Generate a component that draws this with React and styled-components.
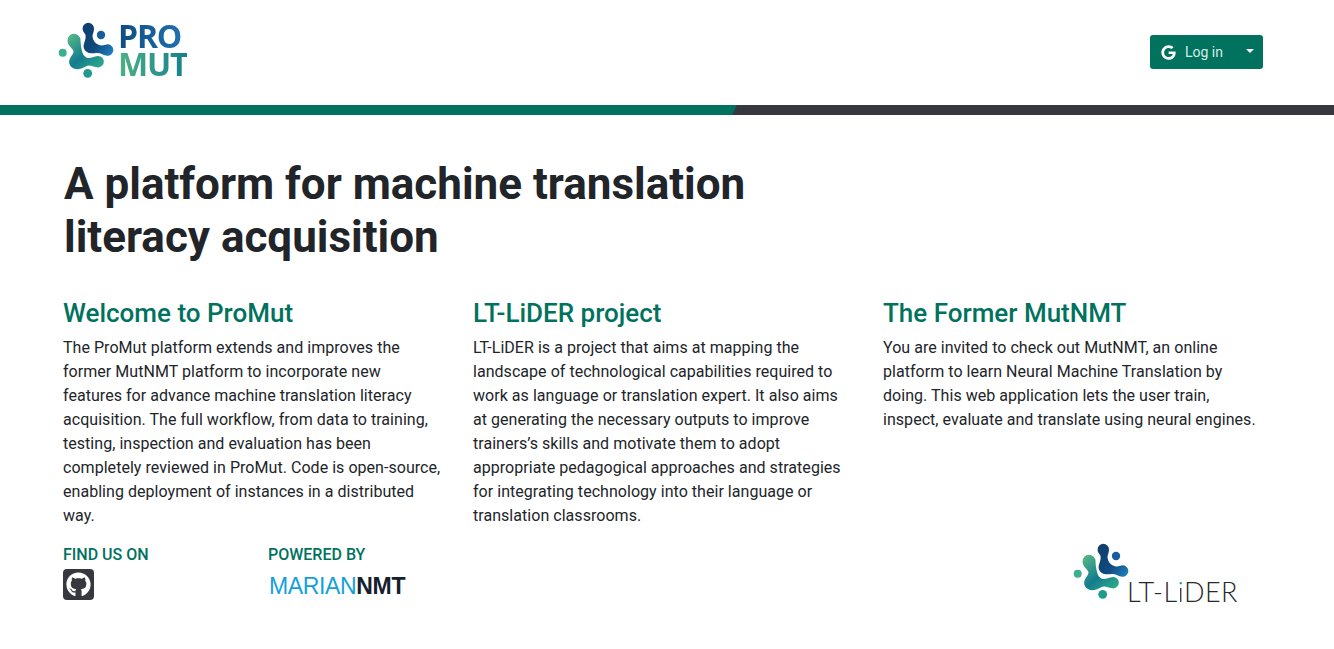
import React from 'react'
import styled, { createGlobalStyle } from 'styled-components'
import { FaGithub, FaGoogle } from 'react-icons/fa'

const GlobalStyle = createGlobalStyle`
  html, body {
    margin: 0;
    padding: 0;
    background: #fff;
    font-family: Roboto, "Liberation Sans", sans-serif;
    color: #212529;
  }
`

const Header = styled.header`
  height: 105px;
  display: flex;
  align-items: flex-start;
  justify-content: space-between;
  padding: 0 71px 0 58px;
`

const Brand = styled.a`
  display: flex;
  align-items: flex-start;
  margin-top: 22px;
  text-decoration: none;
`

const BrandWords = styled.div`
  display: flex;
  flex-direction: column;
  font-family: "Open Sans", "Noto Sans", sans-serif;
  font-size: 32px;
  font-weight: 700;
  line-height: 28px;
  letter-spacing: -1.2px;
`

const BrandWord = styled.span`
  background: linear-gradient(90deg, ${p => p.$from}, ${p => p.$to});
  -webkit-background-clip: text;
  background-clip: text;
  color: transparent;
  width: max-content;
`

const LoginButton = styled.button`
  width: 113px;
  height: 34px;
  margin-top: 35px;
  padding: 0 9px 0 11px;
  display: flex;
  align-items: center;
  background: #00725e;
  color: #d6ece7;
  border: 0;
  border-radius: 3px;
  font-family: Roboto, sans-serif;
  font-size: 14px;
  svg { color: #fff; }
`

const LoginLabel = styled.span`
  margin-left: 9px;
  flex: 1;
  text-align: left;
`

const Caret = styled.span`
  width: 0;
  height: 0;
  border-left: 4px solid transparent;
  border-right: 4px solid transparent;
  border-top: 4px solid #fff;
  margin-bottom: 2px;
`

const Stripe = styled.div`
  height: 10px;
  background: #36373f;
`

const StripeAccent = styled.div`
  width: 737px;
  height: 100%;
  background: #00725e;
  clip-path: polygon(0 0, 100% 0, calc(100% - 5px) 100%, 0 100%);
`

const Main = styled.main`
  padding: 43px 71px 0 63px;
`

const Title = styled.h1`
  margin: 0 0 34px 1px;
  width: 760px;
  font-size: 44px;
  font-weight: 700;
  line-height: 53px;
  color: #212529;
`

const Columns = styled.div`
  display: grid;
  grid-template-columns: repeat(3, 410px);
`

const Column = styled.section`
  padding-right: 30px;
`

const ColumnTitle = styled.h2`
  margin: 0 0 8px;
  font-size: 26px;
  font-weight: 500;
  line-height: 30px;
  color: #00725e;
`

const Body = styled.p`
  margin: 0;
  font-size: 16px;
  line-height: 24px;
  letter-spacing: 0.04px;
  color: #212529;
`

const Footer = styled.footer`
  display: grid;
  grid-template-columns: 205px 615px 1fr;
  margin-top: 17px;
`

const FooterLabel = styled.h3`
  margin: 0 0 4px;
  font-size: 16px;
  font-weight: 500;
  line-height: 20px;
  color: #00725e;
`

const GithubBadge = styled.a`
  width: 31px;
  height: 31px;
  display: flex;
  align-items: center;
  justify-content: center;
  background: #36373f;
  border-radius: 4px;
  color: #fff;
`

const Marian = styled.div`
  margin: 6px 0 0 1px;
  font-family: "Liberation Sans", Arial, sans-serif;
  font-size: 23px;
  line-height: 30px;
  letter-spacing: -0.35px;
  color: #14a0dc;
`

const MarianBold = styled.b`
  color: #15202e;
`

const Partner = styled.div`
  display: flex;
  align-items: flex-end;
  justify-content: flex-end;
  margin: -2px 0 0;
  padding-right: 25px;
  height: 60px;
`

const PartnerWord = styled.span`
  margin-left: -6px;
  margin-bottom: -4px;
  font-family: Lato, sans-serif;
  font-size: 27px;
  font-weight: 300;
  line-height: 30px;
  letter-spacing: 0.5px;
  color: #26282b;
`

const PartnerDot = styled.span`
  background: linear-gradient(180deg, #1fa58c 38%, #26282b 38%);
  -webkit-background-clip: text;
  background-clip: text;
  color: transparent;
`

const LogoMark = ({ id }) => (
  <svg width="60" height="60" viewBox="0 0 60 60" aria-hidden="true">
    <defs>
      <linearGradient id={`${id}-blue`} gradientUnits="userSpaceOnUse" x1="28" y1="8" x2="56" y2="30">
        <stop offset="0" stopColor="#0f4070" />
        <stop offset="0.5" stopColor="#0f4a7e" />
        <stop offset="1" stopColor="#1f80c2" />
      </linearGradient>
      <linearGradient id={`${id}-green`} gradientUnits="userSpaceOnUse" x1="14" y1="14" x2="40" y2="46">
        <stop offset="0" stopColor="#50b285" />
        <stop offset="0.55" stopColor="#137c8e" />
        <stop offset="1" stopColor="#2ba98a" />
      </linearGradient>
    </defs>
    <path
      d="M9.5 18.7 A6.5 6.5 0 0 1 22.5 18 C22.7 22 23 25.5 24 29 C24.8 32 26.5 35.5 30 36 C33 36.4 35.5 34.5 40 34 A5.7 5.7 0 1 1 40.3 45.4 C36.5 45.4 34 43.5 31 43.5 C28 43.5 25 47.2 19.5 47.2 C13 47.2 10 42 11.5 37.5 C12.5 34.5 15.5 32 15.5 29.5 C15.5 26.5 9.5 24 9.5 18.7 Z"
      fill={`url(#${id}-green)`}
    />
    <path
      d="M24.6 6.5 A5.7 5.7 0 0 1 36 6.5 C36 10.5 34.2 12 34.6 15 C35 18.5 37 21 40 22.5 C43 24.2 45 23.2 47.5 22.8 A5.7 5.7 0 1 1 48 33.5 C45 33 43 31 39 31 C35 31.2 32 32 29 30 C25.5 28 25 24 26.2 21 C27.3 18 28 15.5 27.5 13 C27 11 24.6 10 24.6 6.5 Z"
      fill={`url(#${id}-blue)`}
    />
    <circle cx="43" cy="13" r="4.2" fill="#15609c" />
    <circle cx="4.7" cy="30.7" r="4" fill="#3bb08f" />
    <circle cx="29.7" cy="51.3" r="4.4" fill="#1f9a8c" />
  </svg>
)

const columns = [
  {
    title: 'Welcome to ProMut',
    text: 'The ProMut platform extends and improves the former MutNMT platform to incorporate new features for advance machine translation literacy acquisition. The full workflow, from data to training, testing, inspection and evaluation has been completely reviewed in ProMut. Code is open-source, enabling deployment of instances in a distributed way.',
  },
  {
    title: 'LT-LiDER project',
    text: 'LT-LiDER is a project that aims at mapping the landscape of technological capabilities required to work as language or translation expert. It also aims at generating the necessary outputs to improve trainers’s skills and motivate them to adopt appropriate pedagogical approaches and strategies for integrating technology into their language or translation classrooms.',
  },
  {
    title: 'The Former MutNMT',
    text: 'You are invited to check out MutNMT, an online platform to learn Neural Machine Translation by doing. This web application lets the user train, inspect, evaluate and translate using neural engines.',
  },
]

const App = () => {
  return (
    <>
      <GlobalStyle />
      <Header>
        <Brand href="#">
          <LogoMark id="brand" />
          <BrandWords>
            <BrandWord $from="#0f4c81" $to="#1f6fb0">PRO</BrandWord>
            <BrandWord $from="#4fb184" $to="#14808e">MUT</BrandWord>
          </BrandWords>
        </Brand>
        <LoginButton>
          <FaGoogle size={15} />
          <LoginLabel>Log in</LoginLabel>
          <Caret />
        </LoginButton>
      </Header>
      <Stripe>
        <StripeAccent />
      </Stripe>
      <Main>
        <Title>A platform for machine translation literacy acquisition</Title>
        <Columns>
          {columns.map(col => (
            <Column key={col.title}>
              <ColumnTitle>{col.title}</ColumnTitle>
              <Body>{col.text}</Body>
            </Column>
          ))}
        </Columns>
        <Footer>
          <div>
            <FooterLabel>FIND US ON</FooterLabel>
            <GithubBadge href="#"><FaGithub size={25} /></GithubBadge>
          </div>
          <div>
            <FooterLabel>POWERED BY</FooterLabel>
            <Marian>MARIAN<MarianBold>NMT</MarianBold></Marian>
          </div>
          <Partner>
            <LogoMark id="partner" />
            <PartnerWord>LT-L<PartnerDot>i</PartnerDot>DER</PartnerWord>
          </Partner>
        </Footer>
      </Main>
    </>
  )
}

export default App
